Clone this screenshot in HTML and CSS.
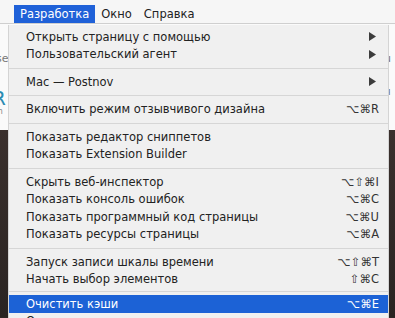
FILE: index.html
```html
<!DOCTYPE html>
<html lang="ru">
<head>
    <meta charset="UTF-8">
    <meta name="viewport" content="width=device-width, initial-scale=1.0">
    <title>Меню Разработка</title>
    <link rel="stylesheet" href="styles.css">
</head>
<body>
    <div class="screen">
        <div class="menubar">
            <span class="bar-item open">Разработка</span>
            <span class="bar-item">Окно</span>
            <span class="bar-item">Справка</span>
        </div>

        <!-- страница под меню -->
        <div class="page">
            <div class="page-left">
                <span class="frag-text">se</span>
                <span class="frag-logo">R</span>
                <span class="frag-small">m</span>
            </div>
            <div class="page-right">
                <span class="frag-text">u</span>
                <span class="frag-text">я</span>
            </div>
        </div>

        <div class="menu">
            <div class="item"><span>Открыть страницу с помощью</span><svg class="arrow" width="7" height="9" viewBox="0 0 7 9"><polygon points="0,0 7,4.5 0,9"/></svg></div>
            <div class="item"><span>Пользовательский агент</span><svg class="arrow" width="7" height="9" viewBox="0 0 7 9"><polygon points="0,0 7,4.5 0,9"/></svg></div>
            <div class="sep"></div>
            <div class="item"><span>Mac — Postnov</span><svg class="arrow" width="7" height="9" viewBox="0 0 7 9"><polygon points="0,0 7,4.5 0,9"/></svg></div>
            <div class="sep"></div>
            <div class="item"><span>Включить режим отзывчивого дизайна</span><span class="key">⌥⌘R</span></div>
            <div class="sep"></div>
            <div class="item"><span>Показать редактор сниппетов</span></div>
            <div class="item"><span>Показать Extension Builder</span></div>
            <div class="sep"></div>
            <div class="item"><span>Скрыть веб-инспектор</span><span class="key">⌥⇧⌘I</span></div>
            <div class="item"><span>Показать консоль ошибок</span><span class="key">⌥⌘C</span></div>
            <div class="item"><span>Показать программный код страницы</span><span class="key">⌥⌘U</span></div>
            <div class="item"><span>Показать ресурсы страницы</span><span class="key">⌥⌘A</span></div>
            <div class="sep"></div>
            <div class="item"><span>Запуск записи шкалы времени</span><span class="key">⌥⇧⌘T</span></div>
            <div class="item"><span>Начать выбор элементов</span><span class="key">⇧⌘C</span></div>
            <div class="sep tight"></div>
            <div class="item active"><span>Очистить кэши</span><span class="key">⌥⌘E</span></div>
            <div class="item"><span>Отключить кэши</span></div>
        </div>
    </div>
</body>
</html>
```

FILE: styles.css
```css
body { margin: 0; font-family: "DejaVu Sans", sans-serif; font-size: 11.5px; color: #222; background: #2e2725; }
.screen { position: relative; width: 395px; height: 318px; overflow: hidden; }

.menubar { height: 24px; box-sizing: border-box; padding-left: 14px; display: flex; align-items: flex-end; background: #f6f6f6; border-bottom: 1px solid #cfcfcf; }
.bar-item { height: 18px; line-height: 18px; padding: 0 6px; color: #222; }
.bar-item.open { background: #1f61d8; color: #fff; }

.page { height: 293px; display: flex; justify-content: space-between; background: linear-gradient(to bottom, #fafafa 0, #fafafa 106px, #3a302d 106px, #2a2422 100%); }
.page-left { width: 8px; padding-top: 28px; display: flex; flex-direction: column; overflow: hidden; }
.page-right { width: 7px; padding-top: 28px; display: flex; flex-direction: column; gap: 20px; overflow: hidden; }
.frag-text { color: #777; font-size: 11px; margin-left: -4px; }
.frag-logo { color: #2b8cb3; font-size: 20px; margin-top: 24px; margin-left: -8px; line-height: 18px; }
.frag-small { color: #888; font-size: 8px; margin-left: -5px; line-height: 9px; }

.menu { position: absolute; left: 8px; top: 25px; width: 381px; height: 300px; box-sizing: border-box; padding-top: 3px; background: #f0f0f0; border-left: 1px solid #d4d4d4; border-right: 1px solid #d4d4d4; }
.item { height: 17.5px; display: flex; align-items: center; justify-content: space-between; padding: 0 9px 0 17px; white-space: nowrap; }
.item.active { background: #1c62d6; color: #fff; }
.key { color: #333; }
.item.active .key { color: #fff; }
.arrow { fill: #3c3c3c; margin-right: 3px; }
.sep { height: 1px; margin: 4.5px 0; background: #d6d6d6; }
.sep.tight { margin: 3px 0; }
```
